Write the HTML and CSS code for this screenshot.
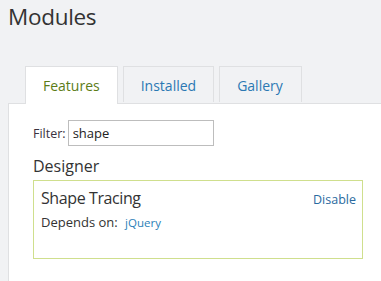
FILE: index.html
```html
<!DOCTYPE html>
<html>
<head>
	<title>Modules</title>
	<link rel="stylesheet" href="styles.css">
</head>
<body>
	<h1 class="title">Modules</h1>

	<ul class="tabs">
		<li class="tab selected"><a href="#">Features</a></li>
		<li class="tab"><a href="#">Installed</a></li>
		<li class="tab"><a href="#">Gallery</a></li>
	</ul>

	<div class="panel">
		<form class="filter">
			<label for="filter">Filter:</label>
			<input id="filter" type="text" value="shape">
		</form>

		<h2 class="category">Designer</h2>
		<div class="feature">
			<div class="feature_head">
				<h3 class="feature_name">Shape Tracing</h3>
				<a class="action" href="#">Disable</a>
			</div>
			<div class="depends">Depends on: <a href="#">jQuery</a></div>
		</div>
	</div>
</body>
</html>
```

FILE: styles.css
```css
html, body { margin: 0; padding: 0; height: 100%; }
body { background: #f1f2f4; color: #333; font-family: "Open Sans", "Noto Sans", sans-serif; display: flex; flex-direction: column; }
a { text-decoration: none; }

.title { margin: 0; padding: 2px 0 0 8px; font-size: 22.5px; font-weight: normal; line-height: 30px; letter-spacing: -0.3px; color: #333; }

.tabs { list-style: none; margin: 34px 0 0 25px; padding: 0; display: flex; gap: 5px; }
.tab { height: 35px; border: 1px solid #dfe0e2; border-bottom: 0; background: #f1f2f4; }
.tab a { display: block; padding: 0 17px; line-height: 38px; font-size: 14px; color: #2b78b3; }
.tab.selected { background: #fff; height: 37px; margin-bottom: -1px; position: relative; }
.tab.selected a { padding: 0 17px 0 17px; color: #5c7c17; }
.tab:last-child a { padding: 0 18px 0 17px; }

.panel { flex: 1; margin-left: 8px; background: #fff; border-top: 1px solid #dfe0e2; border-left: 1px solid #dfe0e2; padding: 16px 18px 0 24px; }

.filter { display: flex; align-items: center; gap: 2px; }
.filter label { font-size: 12.5px; color: #3a3340; }
.filter input { width: 136px; height: 24px; margin: 0; padding: 0 4px; border: 1px solid #bdbdbd; font: 13px "Open Sans", sans-serif; color: #222; }

.category { margin: 9px 0 3px 0; font-size: 16px; font-weight: normal; line-height: 22px; color: #333; }

.feature { border: 1px solid #cfdf8d; height: 77px; padding: 0 6px 0 7px; }
.feature_head { display: flex; justify-content: space-between; align-items: baseline; margin-top: 6px; }
.feature_name { margin: 0; font-size: 16px; font-weight: normal; line-height: 22px; letter-spacing: -0.4px; color: #333; }
.action { font-size: 12.5px; color: #2a6aa0; }
.depends { margin-top: 4px; font-size: 13px; color: #333; }
.depends a { margin-left: 4px; font-size: 11.5px; color: #2a7fb8; }
```
